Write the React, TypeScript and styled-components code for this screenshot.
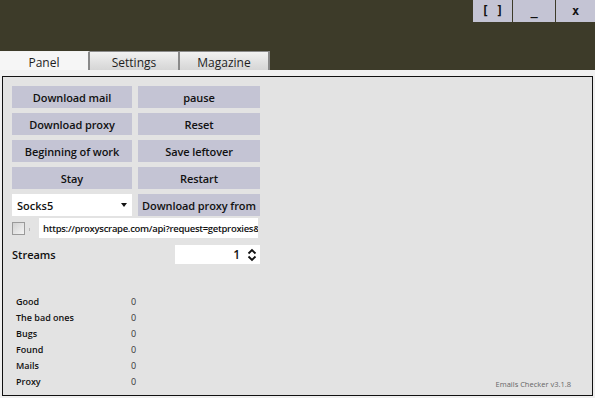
import React from 'react';
import styled, { createGlobalStyle } from 'styled-components';

const DARK = '#3d3b29';
const LAVENDER = '#c4c4d4';
const PANEL_BG = '#e3e3e3';
const FONT = '"Open Sans", "Noto Sans", sans-serif';

const GlobalStyle = createGlobalStyle`
  html, body {
    margin: 0;
    padding: 0;
    background: #f0f0f0;
    font-family: ${FONT};
  }
  * {
    box-sizing: border-box;
  }
`;

const Window = styled.div`
  width: 595px;
  height: 398px;
  display: flex;
  flex-direction: column;
  overflow: hidden;
`;

const TitleBar = styled.header`
  height: 70px;
  background: ${DARK};
  display: flex;
  flex-direction: column;
  justify-content: space-between;
`;

const Controls = styled.div`
  display: flex;
  align-self: flex-end;
  gap: 1px;
  background: ${DARK};
`;

const ControlButton = styled.button<{ $w: number }>`
  width: ${(p) => p.$w}px;
  height: 22px;
  border: none;
  padding: 0;
  background: ${LAVENDER};
  color: #111;
  font-family: "DejaVu Sans Mono", monospace;
  font-weight: 700;
  font-size: 12px;
  display: flex;
  align-items: center;
  justify-content: center;
`;

const Tabs = styled.nav`
  display: flex;
  height: 19px;
`;

const Tab = styled.div<{ $active?: boolean }>`
  width: 90px;
  height: 19px;
  display: flex;
  align-items: center;
  justify-content: center;
  padding-top: 2px;
  font-size: 12px;
  color: #1e1e1e;
  border-top: 1px solid ${(p) => (p.$active ? '#f3f3f3' : '#8a8a8a')};
  border-right: 2px solid #8a8a8a;
  background: ${(p) =>
    p.$active ? '#f6f6f6' : 'linear-gradient(#f2f2f2, #e0e0e0 60%, #d6d6d6)'};
`;

const Body = styled.main`
  flex: 1;
  padding: 6px 2px 2px 2px;
  background: #f0f0f0;
  display: flex;
`;

const Panel = styled.section`
  flex: 1;
  border: 1px solid #111;
  background: ${PANEL_BG};
  padding: 9px 10px 6px 9px;
  display: flex;
  flex-direction: column;
`;

const ButtonGrid = styled.div`
  display: grid;
  grid-template-columns: 120px 122px;
  grid-auto-rows: 22px;
  column-gap: 6px;
  row-gap: 5px;
`;

const ActionButton = styled.button`
  border: none;
  padding: 0;
  background: ${LAVENDER};
  color: #111;
  font-family: ${FONT};
  font-weight: 600;
  font-size: 11px;
  letter-spacing: -0.1px;
  white-space: nowrap;
  display: flex;
  align-items: center;
  justify-content: center;
`;

const Select = styled.div`
  background: #fff;
  display: flex;
  align-items: center;
  justify-content: space-between;
  padding: 0 5px 0 5px;
  font-weight: 600;
  font-size: 11px;
  color: #111;
`;

const Caret = styled.span`
  width: 0;
  height: 0;
  border-left: 3.5px solid transparent;
  border-right: 3.5px solid transparent;
  border-top: 4px solid #111;
`;

const UrlRow = styled.div`
  display: flex;
  align-items: center;
  margin-top: 2px;
  height: 20px;
`;

const Checkbox = styled.span`
  width: 13px;
  height: 13px;
  border: 1px solid #9a9a9a;
  background: linear-gradient(135deg, #d2d2d2, #f4f4f4);
`;

const CheckMark = styled.span`
  width: 1px;
  height: 3px;
  margin: 3px 9px 0 4px;
  background: #b8b8b8;
`;

const UrlInput = styled.div`
  width: 219px;
  height: 20px;
  background: #fff;
  padding-left: 4px;
  font-size: 9.5px;
  font-weight: 600;
  letter-spacing: -0.3px;
  color: #111;
  white-space: nowrap;
  overflow: hidden;
  display: flex;
  align-items: center;
`;

const StreamsRow = styled.div`
  display: flex;
  align-items: center;
  justify-content: space-between;
  width: 248px;
  margin-top: 7px;
  height: 19px;
`;

const Label = styled.span`
  font-size: 11px;
  font-weight: 600;
  color: #111;
`;

const Spinner = styled.div`
  width: 85px;
  height: 19px;
  background: #fff;
  display: flex;
  align-items: center;
  justify-content: flex-end;
  gap: 7px;
  padding-right: 3px;
  font-size: 12px;
  font-weight: 600;
  color: #111;
`;

const Bottom = styled.div`
  margin-top: auto;
  display: flex;
  justify-content: space-between;
  align-items: flex-end;
`;

const Stats = styled.dl`
  margin: 0 0 0 4px;
  display: grid;
  grid-template-columns: 115px auto;
  grid-auto-rows: 16px;
  align-items: center;
`;

const StatName = styled.dt`
  font-size: 9px;
  font-weight: 600;
  color: #111;
`;

const StatValue = styled.dd`
  margin: 0;
  font-size: 9px;
  color: #333;
`;

const Version = styled.span`
  font-size: 7.5px;
  color: #666;
  margin: 0 11px 0 0;
`;

const SpinArrows = () => (
  <svg width="10" height="14" viewBox="0 0 10 14">
    <path d="M1.5 5.5 L5 2 L8.5 5.5" fill="none" stroke="#111" strokeWidth="1.8" />
    <path d="M1.5 8.5 L5 12 L8.5 8.5" fill="none" stroke="#111" strokeWidth="1.8" />
  </svg>
);

const actions = [
  ['Download mail', 'pause'],
  ['Download proxy', 'Reset'],
  ['Beginning of work', 'Save leftover'],
  ['Stay', 'Restart'],
];

const stats = ['Good', 'The bad ones', 'Bugs', 'Found', 'Mails', 'Proxy'];

export default function App() {
  return (
    <Window>
      <GlobalStyle />
      <TitleBar>
        <Controls>
          <ControlButton $w={39}>[ ]</ControlButton>
          <ControlButton $w={42}>_</ControlButton>
          <ControlButton $w={39}>x</ControlButton>
        </Controls>
        <Tabs>
          <Tab $active>Panel</Tab>
          <Tab>Settings</Tab>
          <Tab>Magazine</Tab>
        </Tabs>
      </TitleBar>
      <Body>
        <Panel>
          <ButtonGrid>
            {actions.map(([a, b]) => (
              <React.Fragment key={a}>
                <ActionButton>{a}</ActionButton>
                <ActionButton>{b}</ActionButton>
              </React.Fragment>
            ))}
            <Select>
              Socks5
              <Caret />
            </Select>
            <ActionButton>Download proxy from</ActionButton>
          </ButtonGrid>
          <UrlRow>
            <Checkbox />
            <CheckMark />
            <UrlInput>https://proxyscrape.com/api?request=getproxies&amp;</UrlInput>
          </UrlRow>
          <StreamsRow>
            <Label>Streams</Label>
            <Spinner>
              1
              <SpinArrows />
            </Spinner>
          </StreamsRow>
          <Bottom>
            <Stats>
              {stats.map((s) => (
                <React.Fragment key={s}>
                  <StatName>{s}</StatName>
                  <StatValue>0</StatValue>
                </React.Fragment>
              ))}
            </Stats>
            <Version>Emails Checker v3.1.8</Version>
          </Bottom>
        </Panel>
      </Body>
    </Window>
  );
}
